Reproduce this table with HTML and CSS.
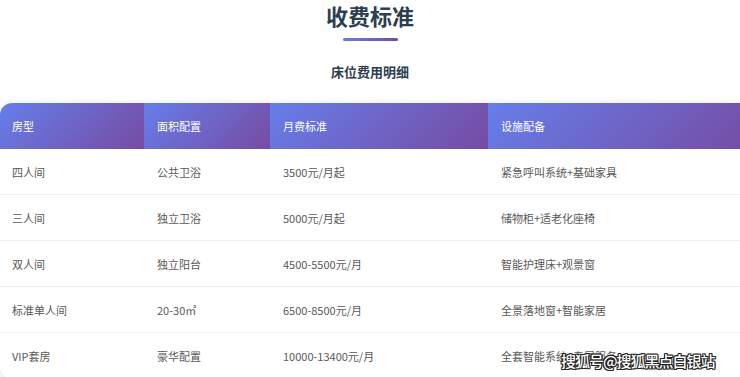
FILE: index.html
```html
<!DOCTYPE html>
<html lang="zh">
<head>
<meta charset="utf-8">
<link rel="stylesheet" href="styles.css">
</head>
<body>
<div class="page">
  <h1 class="title">收费标准</h1>
  <div class="bar"></div>
  <h2 class="subtitle">床位费用明细</h2>
  <div class="card">
    <table class="fees">
      <thead>
        <tr>
          <th class="c1">房型</th>
          <th class="c2">面积配置</th>
          <th class="c3">月费标准</th>
          <th class="c4">设施配备</th>
        </tr>
      </thead>
      <tbody>
        <tr><td>四人间</td><td>公共卫浴</td><td>3500元/月起</td><td>紧急呼叫系统+基础家具</td></tr>
        <tr><td>三人间</td><td>独立卫浴</td><td>5000元/月起</td><td>储物柜+适老化座椅</td></tr>
        <tr><td>双人间</td><td>独立阳台</td><td>4500-5500元/月</td><td>智能护理床+观景窗</td></tr>
        <tr><td>标准单人间</td><td>20-30㎡</td><td>6500-8500元/月</td><td>全景落地窗+智能家居</td></tr>
        <tr><td>VIP套房</td><td>豪华配置</td><td>10000-13400元/月</td><td>全套智能系统+专属服务</td></tr>
      </tbody>
    </table>
  </div>
</div>
<div class="watermark">搜狐号@搜狐黑点白银站</div>
</body>
</html>
```

FILE: styles.css
```css
html, body {
  margin: 0;
  padding: 0;
  overflow: hidden;
  background: #fff;
}
body {
  width: 740px;
  height: 377px;
  position: relative;
  font-family: "Noto Sans CJK SC", "Noto Sans", sans-serif;
}
.page {
  display: flex;
  flex-direction: column;
  align-items: center;
  padding-top: 3px;
}
.title {
  margin: 0;
  font-size: 22px;
  line-height: 24px;
  font-weight: 700;
  color: #2c3e50;
}
.bar {
  width: 55px;
  height: 3px;
  margin-top: 11px;
  border-radius: 2px;
  background: linear-gradient(90deg, #667eea, #764ba2);
}
.subtitle {
  margin: 21px 0 0;
  font-size: 13px;
  line-height: 20px;
  font-weight: 700;
  color: #2c3e50;
}
.card {
  align-self: flex-start;
  margin-top: 21px;
  width: 760px;
  border-radius: 12px;
  overflow: hidden;
  background: #fff;
  box-shadow: 0 2px 10px rgba(0,0,0,0.12);
}
.fees {
  width: 100%;
  border-collapse: collapse;
  table-layout: fixed;
  font-size: 11px;
}
.fees th {
  height: 46px;
  padding: 0 0 0 13px;
  text-align: left;
  font-weight: 400;
  color: #fff;
  background: linear-gradient(135deg, #667eea 0%, #764ba2 100%);
}
.fees .c1 { width: 132px; padding-left: 12px; }
.fees .c2 { width: 113px; }
.fees .c3 { width: 205px; }
.fees td {
  height: 45px;
  padding: 0 0 0 13px;
  color: #595959;
  border-bottom: 1px solid #eee;
}
.fees td:first-child { padding-left: 12px; }
.watermark {
  position: absolute;
  left: 561px;
  top: 350px;
  font-size: 15px;
  line-height: 22px;
  letter-spacing: -1px;
  color: #fff;
  font-weight: 500;
  text-shadow: 1px 0 0 #222, -1px 0 0 #222, 0 1px 0 #222, 0 -1px 0 #222, 1px 1px 0 #222, -1px -1px 0 #222, 1px -1px 0 #222, -1px 1px 0 #222;
}
```
